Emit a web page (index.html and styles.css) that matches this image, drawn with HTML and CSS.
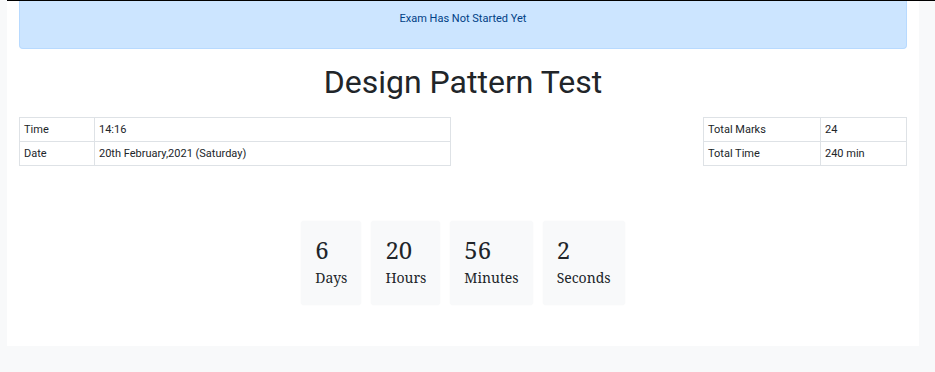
FILE: index.html
```html
<!DOCTYPE html>
<html>
<head>
<meta charset="utf-8">
<link rel="stylesheet" href="styles.css">
</head>
<body>
<div class="topline"></div>
<div class="panel">
  <div class="alert">Exam Has Not Started Yet</div>
  <h1 class="title">Design Pattern Test</h1>
  <div class="tables">
    <table class="info left">
      <tr><td class="k">Time</td><td>14:16</td></tr>
      <tr><td class="k">Date</td><td>20th February,2021 (Saturday)</td></tr>
    </table>
    <table class="info right">
      <tr><td class="k2">Total Marks</td><td>24</td></tr>
      <tr><td class="k2">Total Time</td><td>240 min</td></tr>
    </table>
  </div>
  <div class="timer">
    <div class="box"><div class="num">6</div><div class="lbl">Days</div></div>
    <div class="box"><div class="num">20</div><div class="lbl">Hours</div></div>
    <div class="box"><div class="num">56</div><div class="lbl">Minutes</div></div>
    <div class="box"><div class="num">2</div><div class="lbl">Seconds</div></div>
  </div>
</div>
</body>
</html>
```
FILE: styles.css
```css
html, body { margin: 0; padding: 0; }
body {
  background: #f8f9fa;
  font-family: Roboto, "Liberation Sans", sans-serif;
  color: #212529;
  width: 935px;
  height: 372px;
  overflow: hidden;
}
.topline {
  height: 1px;
  background: #000;
  margin-left: 7px;
}
.panel {
  background: #fff;
  margin-left: 7px;
  width: 888px;
  padding: 0 12px;
  height: 345px;
  box-sizing: content-box;
}
.alert {
  background: #cce5ff;
  border: 1px solid #b8daff;
  border-top: none;
  border-radius: 0 0 4px 4px;
  color: #004085;
  font-size: 11px;
  text-align: center;
  height: 48px;
  box-sizing: border-box;
  padding-top: 11px;
  line-height: 13px;
}
.title {
  margin: 0;
  font-weight: 400;
  font-size: 32px;
  line-height: 38px;
  text-align: center;
  padding-top: 14px;
  height: 68px;
  box-sizing: border-box;
}
.tables {
  display: flex;
  justify-content: space-between;
}
.info {
  border-collapse: collapse;
  font-size: 11px;
}
.info td {
  border: 1px solid #dee2e6;
  height: 24px;
  padding: 0 4px;
  box-sizing: border-box;
}
.left { width: 432px; }
.left .k { width: 75px; }
.right { width: 204px; }
.right .k2 { width: 117px; }
.timer {
  display: flex;
  justify-content: center;
  gap: 10px;
  margin-top: 55px;
}
.box {
  background: #f8f9fa;
  border-radius: 3px;
  box-shadow: 0 0 2px rgba(0,0,0,0.04);
  padding: 14px 14px 0;
  height: 84px;
  box-sizing: border-box;
  font-family: "Noto Serif", "DejaVu Serif", serif;
}
.num {
  font-size: 24px;
  line-height: 30px;
}
.lbl {
  font-size: 14px;
  line-height: 22px;
  margin-top: 2px;
}
```
